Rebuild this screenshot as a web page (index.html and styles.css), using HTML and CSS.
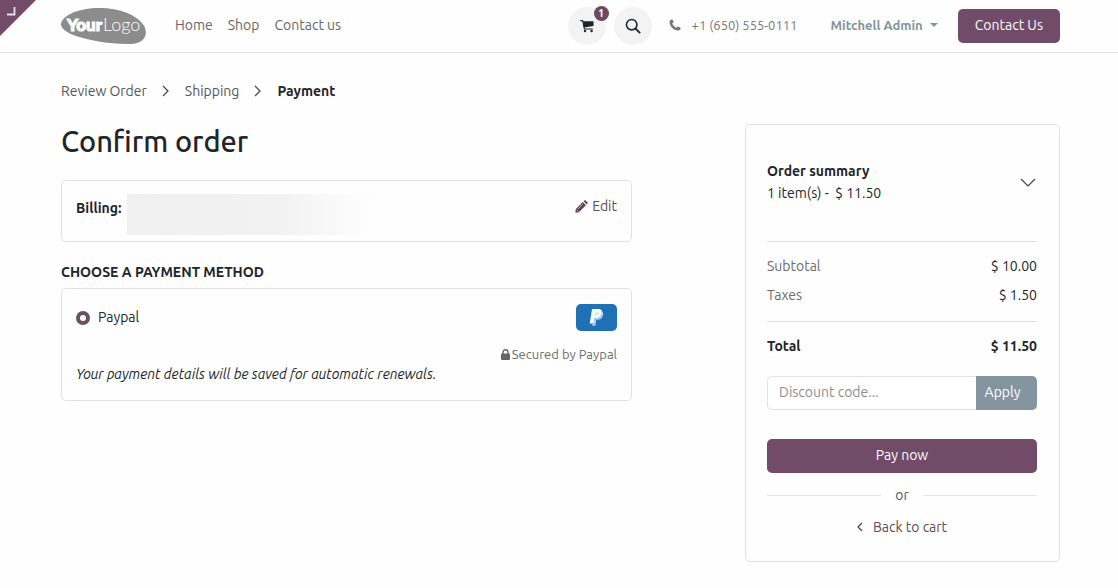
FILE: index.html
```html
<!DOCTYPE html>
<html lang="en">
<head>
<meta charset="utf-8">
<meta name="viewport" content="width=device-width, initial-scale=1">
<title>Confirm order</title>
<link rel="stylesheet" href="styles.css">
</head>
<body>
<header class="site-header">
  <button class="corner" type="button" aria-label="Open apps">
    <svg width="36" height="36" viewBox="0 0 36 36"><path d="M0 0h36L0 36z" fill="#714b67"/><path d="M7 14.500h7.500V7" fill="none" stroke="#eadfe7" stroke-width="1.800"/></svg>
  </button>
  <a class="logo" href="#" aria-label="Your Logo">
    <svg width="86" height="38" viewBox="0 0 86 38">
      <path d="M0 16.500C2 8 18 1 38 1c21 0 38 7 44.500 17 2.500 4 3 8 1.500 11.500-2.500 6-9 7.500-17 7.500C47 37 24 33 10 27 3 24-.5 20 0 16.500z" fill="#8c8c8c"/>
      <text x="6" y="24" class="logo-bold">Your</text><text x="42" y="24" class="logo-light">Logo</text>
    </svg>
  </a>
  <nav class="main-nav">
    <a href="#">Home</a><a href="#">Shop</a><a href="#">Contact us</a>
  </nav>
  <div class="tools">
    <a class="round" href="#" aria-label="Cart">
      <svg width="14" height="14" viewBox="0 0 14 14"><path d="M.7 1.700h2l1.700 8.300h7.900" fill="none" stroke="#212529" stroke-width="1.200" stroke-linecap="round" stroke-linejoin="round"/><path d="M2.900 2.300h10.600v4.600l-9.300 1.500z" fill="#212529"/><circle cx="5" cy="12" r="1.200" fill="#212529"/><circle cx="11.600" cy="12" r="1.200" fill="#212529"/></svg>
      <span class="badge">1</span>
    </a>
    <button class="round" type="button" aria-label="Search">
      <svg width="16" height="16" viewBox="0 0 16 16"><circle cx="6.700" cy="6.700" r="5.200" fill="none" stroke="#212529" stroke-width="1.600"/><path d="M10.600 10.600l4 4" stroke="#212529" stroke-width="2" stroke-linecap="round"/></svg>
    </button>
  </div>
  <a class="phone" href="tel:+16505550111">
    <svg width="12" height="12" viewBox="0 0 12 12"><path d="M2.600.4C1.200.8.400 1.900.5 3.300.9 7.600 4.500 11.200 8.700 11.600c1.400.1 2.500-.7 2.900-2.100.1-.3.100-.6-.2-.8L9.200 7.500c-.3-.1-.5 0-.7.200l-1 1.100C5.500 7.900 4.100 6.500 3.200 4.500l1.100-1c.2-.2.300-.4.200-.7L3.400.6C3.200.3 2.900.3 2.600.4z" fill="#777"/></svg>
    <span>+1 (650) 555-0111</span>
  </a>
  <button class="user" type="button">Mitchell Admin</button>
  <a class="btn contact" href="#">Contact Us</a>
</header>

<main class="page">
  <nav class="steps" aria-label="Checkout steps">
    <a href="#">Review Order</a>
    <svg width="8" height="12" viewBox="0 0 8 12"><path d="M1 1l5 5-5 5"/></svg>
    <a href="#">Shipping</a>
    <svg width="8" height="12" viewBox="0 0 8 12"><path d="M1 1l5 5-5 5"/></svg>
    <strong>Payment</strong>
  </nav>
  <div class="columns">
    <section>
      <h1>Confirm order</h1>
      <div class="card billing">
        <strong>Billing:</strong>
        <span class="redacted"></span>
        <a class="edit" href="#">
          <svg width="13" height="13" viewBox="0 0 13 13"><path d="M.7 9.200L7.800 2.100l3.100 3.100-7.100 7.100-3.300.4zM8.600 1.300l.8-.8q.6-.5 1.200 0L12.500 2.400q.5.600 0 1.200l-.8.800z" fill="#5c4053"/><path d="M3 8.900l5-5M1.700 9.700l1.700 1.700" stroke="#fff" stroke-width=".6"/></svg>
          Edit</a>
      </div>
      <h2>CHOOSE A PAYMENT METHOD</h2>
      <div class="card method">
        <div class="method-row">
          <input type="radio" id="paypal" name="method" checked>
          <label for="paypal">Paypal</label>
          <svg width="41" height="27" viewBox="0 0 41 27"><rect width="41" height="27" rx="5" fill="#1f70b4"/><path d="M16 5h6.200c3.200 0 4.500 1.800 3.800 4.700-.8 3.300-3 4.600-6 4.600h-1.500L17.600 19.500H13.700z" fill="#f4fafd"/><path d="M26.200 7.600c1.100.9 1.200 2.400.8 4-.8 3-2.900 4.200-5.500 4.200h-1.200l-.9 6h-3.200l.5-2.300h.9l.9-5.200H20c3 0 5.200-1.300 6-4.600z" fill="#a8d3ee"/><path d="M19.600 8.200h1.800c1.500 0 2 .7 1.700 1.700-.3 1-1.100 1.600-2.500 1.600H19z" fill="#d3e9f7"/></svg>
        </div>
        <p class="secured">
          <svg width="9" height="11" viewBox="0 0 9 11"><rect y="4.600" width="9" height="6.400" rx="1" fill="#666"/><path d="M2 5V3.300a2.500 2.500 0 0 1 5 0V5" fill="none" stroke="#666" stroke-width="1.400"/></svg>
          Secured by Paypal</p>
        <p class="note">Your payment details will be saved for automatic renewals.</p>
      </div>
    </section>

    <aside class="card summary">
      <button class="summary-head" type="button">
        <span><strong>Order summary</strong><br>1 item(s) -&nbsp; $ 11.50</span>
        <svg width="16" height="9" viewBox="0 0 16 9"><path d="M1 1l7 7 7-7"/></svg>
      </button>
      <table class="totals">
        <tbody>
          <tr><th scope="row">Subtotal</th><td>$ 10.00</td></tr>
          <tr><th scope="row">Taxes</th><td>$ 1.50</td></tr>
        </tbody>
        <tbody class="grand">
          <tr><th scope="row">Total</th><td>$ 11.50</td></tr>
        </tbody>
      </table>
      <form class="discount">
        <input type="text" aria-label="Discount code" placeholder="Discount code...">
        <button type="button">Apply</button>
      </form>
      <button class="btn pay" type="button">Pay now</button>
      <div class="or">or</div>
      <a class="back" href="#">
        <svg width="6" height="10" viewBox="0 0 6 10"><path d="M5 1L1 5l4 4"/></svg>
        Back to cart</a>
    </aside>
  </div>
</main>
</body>
</html>
```
FILE: styles.css
```css
* { box-sizing: border-box; }
body {
  margin: 0;
  background: #fefefe;
  color: #212529;
  font: 14px/22px Ubuntu, "Noto Sans", "Open Sans", sans-serif;
}
a { color: inherit; text-decoration: none; }
button, input { font: inherit; color: inherit; }
button { border: 0; padding: 0; background: none; cursor: pointer; }
h1, h2, p { margin: 0; }
svg { display: block; flex: none; }

.site-header {
  position: relative;
  display: flex;
  align-items: center;
  min-height: 53px;
  padding: 0 58px 1px 61px;
  border-bottom: 1px solid #e6e6e6;
  white-space: nowrap;
}
.corner { position: absolute; top: 0; left: 0; }
.logo-bold, .logo-light { fill: #fff; font-family: Lato, sans-serif; font-size: 17px; }
.logo-bold { font-weight: 900; stroke: #fff; stroke-width: 1px; }
.logo-light { font-size: 18px; font-weight: 300; }
.main-nav { display: flex; gap: 15px; margin-left: 28px; padding-bottom: 2px; color: #666; }
.tools { display: flex; gap: 8px; margin-left: auto; }
.round {
  position: relative;
  display: grid;
  place-items: center;
  width: 38px;
  height: 38px;
  border-radius: 50%;
  background: #f3f3f3;
}
.badge {
  position: absolute;
  top: -1px;
  right: -3px;
  width: 15px;
  border-radius: 8px;
  background: #6b4a5f;
  color: #fff;
  font-size: 11px;
  font-weight: 700;
  line-height: 15px;
  text-align: center;
}
.phone { display: flex; align-items: center; gap: 11px; margin-left: 17px; padding-bottom: 2px; color: #777; font-size: 13px; }
.user { display: flex; align-items: center; gap: 7px; margin-left: 33px; padding-bottom: 2px; color: #84959a; font-size: 13px; font-weight: 700; }
.user::after { content: ""; border: 4px solid transparent; border-top-color: #84959a; border-bottom: 0; }
.btn {
  padding: 0 17px 2px;
  border-radius: 5px;
  background: #714b67;
  color: #fff;
  line-height: 32px;
  text-align: center;
}
.contact { margin-left: 20px; }

.page { padding: 27px 58px 26px 61px; }
.steps { display: flex; align-items: center; gap: 15px; color: #555; }
.steps strong { color: #212529; }
.steps path, .summary-head path, .back path { fill: none; stroke: #444; stroke-width: 1.2; }
.columns {
  display: grid;
  grid-template-columns: minmax(0, 1fr) 315px;
  gap: 113px;
  align-items: start;
  margin-top: 22px;
}
h1 { margin-bottom: 22px; font-family: "Ubuntu Medium", Ubuntu, "Noto Sans", sans-serif; font-size: 29px; font-weight: 500; line-height: 34px; }
h2 { margin: 19px 0 5px; font-size: 14px; line-height: 22px; }
.card { border: 1px solid #dee2e6; border-radius: 5px; }
.billing { display: flex; align-items: flex-start; gap: 6px; padding: 13px 14px 6px; }
.billing strong { padding-top: 3px; }
.redacted { width: 250px; height: 41px; background: linear-gradient(90deg, #f0f0f0, #f2f2f2 60%, #fefefe); }
.edit { display: flex; align-items: center; gap: 4px; margin-left: auto; color: #5c4a55; line-height: 24px; }
.method { padding: 15px 14px 16px; }
.method-row { display: flex; align-items: center; gap: 8px; }
.method-row label { padding-bottom: 2px; }
.method-row svg { margin-left: auto; }
.method-row input {
  appearance: none;
  width: 14px;
  height: 14px;
  margin: 0;
  border: 4px solid #6b5060;
  border-radius: 50%;
  background: #fff;
}
.secured { display: flex; align-items: center; justify-content: flex-end; gap: 2px; margin-top: 13px; color: #6c6c6c; font-size: 13px; line-height: 20px; }
.note { font-style: italic; line-height: 20px; }

.summary { padding: 35px 22px 23px 21px; }
.summary-head { display: flex; align-items: center; justify-content: space-between; width: 100%; padding-right: 1px; text-align: left; }
.totals { width: 100%; margin: 37px 0 12px; border-collapse: collapse; border-top: 1px solid #dee2e6; }
.totals th, .totals td { padding: 0 0 7px; text-align: left; }
.totals th { color: #6c6c6c; font-weight: 400; }
.totals td { text-align: right; }
.totals tr:first-child > * { padding-top: 13px; }
.totals tr:last-child > * { padding-bottom: 15px; }
.totals .grand { border-top: 1px solid #dee2e6; }
.totals .grand tr > * { padding-bottom: 7px; color: #212529; font-weight: 700; }
.discount { display: flex; height: 34px; }
.discount input {
  flex: 1;
  min-width: 0;
  padding: 0 11px 2px;
  border: 1px solid #dee2e6;
  border-right: 0;
  border-radius: 5px 0 0 5px;
  background: #fff;
}
.discount input::placeholder { color: #8d8d8d; }
.discount button { width: 61px; padding: 0 8px 2px 0; border-radius: 0 5px 5px 0; background: #85959f; color: #fff; }
.pay { width: 100%; margin-top: 29px; }
.or { display: flex; align-items: center; gap: 14px; margin: 11px 0 10px; color: #555; }
.or::before, .or::after { content: ""; flex: 1; border-top: 1px solid #e4e6e9; }
.back { display: flex; align-items: center; justify-content: center; gap: 10px; color: #5c4a55; }
```
